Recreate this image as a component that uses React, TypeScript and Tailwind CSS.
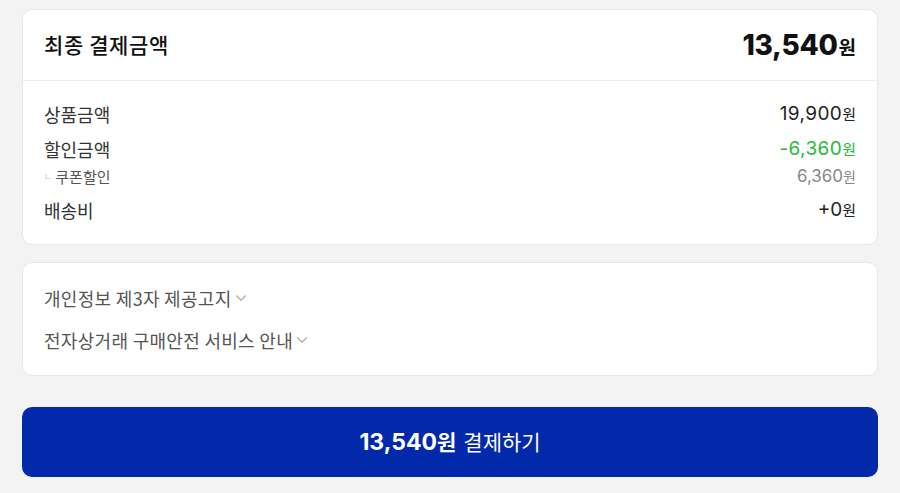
import { ChevronDown } from 'lucide-react';

const kr = { fontFamily: '"Noto Sans CJK KR", "Noto Sans", sans-serif' };
const num = { fontFamily: 'Inter, "Noto Sans CJK KR", sans-serif' };

const Won = ({ className }: { className: string }) => (
  <span className={className} style={kr}>원</span>
);

const Notice = ({ label }: { label: string }) => (
  <div className="flex items-center h-6 text-[18px] tracking-[0.3px] text-[#555]">
    <span>{label}</span>
    <ChevronDown className="w-[18px] h-[18px] text-[#aaa]" strokeWidth={1.5} />
  </div>
);

const App = () => {
  return (
    <div className="w-[900px] h-[493px] bg-[#f3f3f3] px-[22px] pt-[9px] overflow-hidden" style={kr}>
      <section className="bg-white rounded-[10px] border border-[#e8e8e8] h-[236px]">
        <div className="flex items-center justify-between h-[71px] px-[21px] border-b border-[#ececec]">
          <h2 className="text-[21px] tracking-[0.6px] text-[#111] font-medium">최종 결제금액</h2>
          <div className="flex items-baseline text-[#111]">
            <span className="text-[28px] font-extrabold tracking-[-0.3px]" style={num}>13,540</span>
            <Won className="text-[19px] font-bold ml-px" />
          </div>
        </div>

        <div className="px-[21px] pt-[16px]">
          <div className="flex items-center justify-between h-[34px]">
            <span className="text-[18px] text-[#333]">상품금액</span>
            <div className="flex items-baseline text-[#222]">
              <span className="text-[19px] tracking-[0.4px]" style={num}>19,900</span>
              <Won className="text-[15px]" />
            </div>
          </div>
          <div className="flex items-center justify-between h-[36px]">
            <span className="text-[18px] text-[#333]">할인금액</span>
            <div className="flex items-baseline text-[#2bb83a]">
              <span className="text-[19px] tracking-[0.4px]" style={num}>-6,360</span>
              <Won className="text-[15px]" />
            </div>
          </div>
          <div className="flex items-center justify-between h-[20px]">
            <span className="flex items-center text-[15px] text-[#555]">
              <span className="text-[9px] text-[#bbb] mr-[3px]">ㄴ</span>
              쿠폰할인
            </span>
            <div className="flex items-baseline text-[#888]">
              <span className="text-[17px]" style={num}>6,360</span>
              <Won className="text-[14px]" />
            </div>
          </div>
          <div className="flex items-center justify-between h-[46px]">
            <span className="text-[18px] text-[#333]">배송비</span>
            <div className="flex items-baseline text-[#222]">
              <span className="text-[19px]" style={num}>+0</span>
              <Won className="text-[15px]" />
            </div>
          </div>
        </div>
      </section>

      <section className="mt-[17px] bg-white rounded-[10px] border border-[#e8e8e8] h-[114px] px-[21px] pt-[23px] flex flex-col gap-[18px]">
        <Notice label="개인정보 제3자 제공고지" />
        <Notice label="전자상거래 구매안전 서비스 안내" />
      </section>

      <button className="mt-[31px] w-full h-[70px] rounded-[10px] bg-[#0229a9] text-white flex items-center justify-center">
        <span className="text-[23px] font-bold" style={num}>13,540</span>
        <span className="text-[21px] font-bold">원</span>
        <span className="text-[21px] ml-[7px]">결제하기</span>
      </button>
    </div>
  );
};

export default App;
